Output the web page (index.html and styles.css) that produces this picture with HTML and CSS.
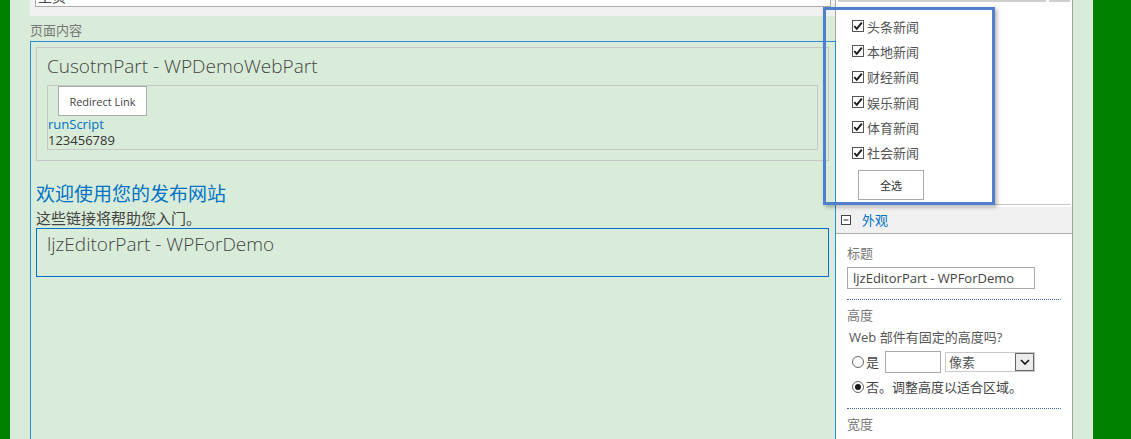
FILE: index.html
```html
<!DOCTYPE html>
<html lang="zh-CN">
<head>
<meta charset="utf-8">
<title>页面内容</title>
<link rel="stylesheet" href="styles.css">
</head>
<body>
<div class="page">
  <div class="main">
    <div class="head">
      <div class="topbar"><div class="topinput"><span class="topinput-text">主页</span></div></div>
      <div class="zone-label">页面内容</div>
    </div>
    <div class="zone">
      <div class="wp">
        <div class="wp-title">CusotmPart - WPDemoWebPart</div>
        <div class="wp-body">
          <button class="btn btn-redirect" type="button">Redirect Link</button>
          <a class="link" href="#">runScript</a>
          <div class="num">123456789</div>
        </div>
      </div>
      <div class="welcome">欢迎使用您的发布网站</div>
      <div class="welcome-sub">这些链接将帮助您入门。</div>
      <div class="editor-box">
        <div class="wp-title">ljzEditorPart - WPForDemo</div>
      </div>
    </div>
  </div>
  <div class="side">
    <div class="side-top"><span class="seg seg-a"></span><span class="seg seg-b"></span></div>
    <div class="checklist">
      <label class="cb-row"><svg class="cb" viewBox="0 0 12 12" width="12" height="12"><rect x="0.5" y="0.5" width="11" height="11" fill="#fff" stroke="#555"/><path d="M2.3 6.2 L4.8 8.8 L9.8 2.6" fill="none" stroke="#1a1a1a" stroke-width="1.9"/></svg><span>头条新闻</span></label>
      <label class="cb-row"><svg class="cb" viewBox="0 0 12 12" width="12" height="12"><rect x="0.5" y="0.5" width="11" height="11" fill="#fff" stroke="#555"/><path d="M2.3 6.2 L4.8 8.8 L9.8 2.6" fill="none" stroke="#1a1a1a" stroke-width="1.9"/></svg><span>本地新闻</span></label>
      <label class="cb-row"><svg class="cb" viewBox="0 0 12 12" width="12" height="12"><rect x="0.5" y="0.5" width="11" height="11" fill="#fff" stroke="#555"/><path d="M2.3 6.2 L4.8 8.8 L9.8 2.6" fill="none" stroke="#1a1a1a" stroke-width="1.9"/></svg><span>财经新闻</span></label>
      <label class="cb-row"><svg class="cb" viewBox="0 0 12 12" width="12" height="12"><rect x="0.5" y="0.5" width="11" height="11" fill="#fff" stroke="#555"/><path d="M2.3 6.2 L4.8 8.8 L9.8 2.6" fill="none" stroke="#1a1a1a" stroke-width="1.9"/></svg><span>娱乐新闻</span></label>
      <label class="cb-row"><svg class="cb" viewBox="0 0 12 12" width="12" height="12"><rect x="0.5" y="0.5" width="11" height="11" fill="#fff" stroke="#555"/><path d="M2.3 6.2 L4.8 8.8 L9.8 2.6" fill="none" stroke="#1a1a1a" stroke-width="1.9"/></svg><span>体育新闻</span></label>
      <label class="cb-row"><svg class="cb" viewBox="0 0 12 12" width="12" height="12"><rect x="0.5" y="0.5" width="11" height="11" fill="#fff" stroke="#555"/><path d="M2.3 6.2 L4.8 8.8 L9.8 2.6" fill="none" stroke="#1a1a1a" stroke-width="1.9"/></svg><span>社会新闻</span></label>
      <button class="btn btn-all" type="button">全选</button>
    </div>
    <div class="divider"></div>
    <div class="sec-head">
      <svg class="minus" viewBox="0 0 10 10" width="10" height="10"><rect x="0.5" y="0.5" width="9" height="9" fill="#fff" stroke="#444"/><path d="M2.5 5 H7.5" stroke="#222" stroke-width="1"/></svg>
      <span class="sec-title">外观</span>
    </div>
    <div class="sec-body">
      <div class="field-label label-title">标题</div>
      <div class="textbox">ljzEditorPart - WPForDemo</div>
      <div class="dots dots-1"></div>
      <div class="field-label label-height">高度</div>
      <div class="question">Web 部件有固定的高度吗?</div>
      <div class="radio-row row-yes">
        <svg class="radio" viewBox="0 0 12 12" width="12" height="12"><circle cx="6" cy="6" r="5.5" fill="#fff" stroke="#666"/></svg>
        <span class="radio-text">是</span>
        <span class="small-input"></span>
        <span class="select"><span class="select-text">像素</span><span class="select-btn"><svg viewBox="0 0 10 6" width="10" height="6"><path d="M1 1 L5 5 L9 1" fill="none" stroke="#111" stroke-width="1.6"/></svg></span></span>
      </div>
      <div class="radio-row row-no">
        <svg class="radio" viewBox="0 0 12 12" width="12" height="12"><circle cx="6" cy="6" r="5.5" fill="#fff" stroke="#666"/><circle cx="6" cy="6" r="3" fill="#1a1a1a"/></svg>
        <span class="radio-text">否。调整高度以适合区域。</span>
      </div>
      <div class="dots dots-2"></div>
      <div class="field-label label-width">宽度</div>
    </div>
  </div>
</div>
<div class="annot"></div>
</body>
</html>
```

FILE: styles.css
```css
html, body {
  margin: 0;
  padding: 0;
  height: 439px;
  overflow: hidden;
}
body {
  background: #008000;
  font-family: "Segoe UI", "Open Sans", "Noto Sans CJK SC", sans-serif;
  font-size: 13px;
  color: #444;
  position: relative;
}
.page {
  margin-left: 10px;
  width: 1083px;
  height: 439px;
  box-sizing: border-box;
  padding-left: 20px;
  background: #d9ecd9;
  display: flex;
}
.main {
  width: 806px;
  display: flex;
  flex-direction: column;
}
.head {
  height: 41px;
  border-right: 1px solid #a6a6a6;
  box-sizing: border-box;
}
.topbar {
  height: 16px;
  background: #f1f1f1;
  padding-left: 5px;
}
.topinput {
  width: 796px;
  height: 7px;
  box-sizing: border-box;
  background: #fff;
  border: 1px solid #ababab;
  border-top: none;
  overflow: hidden;
  padding-left: 2px;
}
.topinput-text {
  display: block;
  font-size: 14px;
  line-height: 14px;
  margin-top: -10px;
  color: #444;
}
.zone-label {
  font-size: 13px;
  line-height: 17px;
  padding-top: 6px;
  color: #777;
}
.zone {
  flex: 1;
  border: 1px solid #2b8bd6;
  border-bottom: none;
  padding: 5px 6px 0 5px;
}
.wp {
  border: 1px solid #c6c6c6;
  padding: 6px 10px 10px 10px;
}
.wp-title {
  font-family: "Segoe UI Light", "Segoe UI", "Open Sans", sans-serif;
  font-weight: 300;
  font-size: 19px;
  line-height: 24px;
  color: #444;
}
.wp-body {
  margin-top: 7px;
  border: 1px solid #c6c6c6;
  padding-bottom: 1px;
}
.btn {
  font-family: "Segoe UI", "Open Sans", "Noto Sans CJK SC", sans-serif;
  font-size: 11px;
  color: #444;
  background: #fff;
  border: 1px solid #ababab;
  border-radius: 0;
  padding: 0;
  display: block;
}
.btn-redirect {
  width: 89px;
  height: 30px;
  margin-left: 10px;
}
.link {
  display: block;
  color: #0072c6;
  text-decoration: none;
  line-height: 16px;
}
.num {
  line-height: 16px;
  color: #333;
}
.welcome {
  margin-top: 20px;
  font-size: 19px;
  line-height: 26px;
  color: #0072c6;
}
.welcome-sub {
  margin-top: 2px;
  font-size: 15px;
  line-height: 19px;
  color: #444;
}
.editor-box {
  border: 1px solid #0072c6;
  padding: 3px 10px 20px 10px;
}
.side {
  width: 237px;
  box-sizing: border-box;
  background: #fff;
  border-right: 1px solid #a0a0a0;
}
.side-top {
  display: flex;
  padding-left: 2px;
  gap: 3px;
}
.seg {
  height: 0;
  border-bottom: 2px solid #cfcfcf;
}
.seg-a { width: 208px; }
.seg-b { width: 21px; }
.checklist {
  padding-top: 11.5px;
  padding-left: 16px;
}
.cb-row {
  display: flex;
  align-items: center;
  height: 25.3px;
  color: #555;
}
.cb {
  flex: none;
  margin-right: 3px;
}
.btn-all {
  width: 66px;
  height: 30px;
  margin-top: 4.5px;
  margin-left: 6px;
  color: #333;
}
.divider {
  margin: 4px 2px 0 4px;
  height: 1px;
  background: #c6c6c6;
}
.sec-head {
  margin-top: 2px;
  height: 27px;
  box-sizing: border-box;
  background: #f0f0f0;
  border-bottom: 1px solid #ababab;
  display: flex;
  align-items: center;
  padding-left: 5px;
}
.minus {
  flex: none;
  margin-right: 11px;
}
.sec-title {
  color: #0072c6;
  font-size: 13px;
}
.sec-body {
  padding-left: 11px;
}
.field-label {
  color: #777;
  line-height: 17px;
}
.label-title { margin-top: 11px; }
.textbox {
  margin-top: 5px;
  width: 188px;
  height: 22px;
  box-sizing: border-box;
  border: 1px solid #ababab;
  padding-left: 5px;
  line-height: 20px;
  color: #444;
}
.dots {
  width: 214px;
  height: 0;
  border-top: 1px dotted #3d62a8;
}
.dots-1 { margin-top: 10px; }
.dots-2 { margin-top: 11px; }
.label-height { margin-top: 7px; }
.label-width { margin-top: 7px; }
.question {
  padding-left: 2px;
  line-height: 17px;
  margin-top: 5px;
  color: #555;
}
.radio-row {
  display: flex;
  align-items: center;
  color: #444;
}
.row-yes {
  margin-top: 5px;
  height: 22px;
}
.row-no {
  margin-top: 4px;
  height: 20px;
}
.radio {
  flex: none;
  margin-left: 5px;
  margin-right: 2px;
}
.small-input {
  width: 56px;
  height: 22px;
  box-sizing: border-box;
  border: 1px solid #ababab;
  margin-left: 6px;
}
.select {
  margin-left: 4px;
  width: 90px;
  height: 20px;
  box-sizing: border-box;
  border: 1px solid #c8c8c8;
  display: flex;
  align-items: center;
  justify-content: space-between;
  padding-left: 3px;
}
.select-text {
  color: #555;
}
.select-btn {
  width: 19px;
  height: 18px;
  box-sizing: border-box;
  border: 1px solid #666;
  background: #ececec;
  display: flex;
  align-items: center;
  justify-content: center;
}
.annot {
  position: absolute;
  left: 823px;
  top: 7px;
  width: 172px;
  height: 198px;
  box-sizing: border-box;
  border: 3px solid #4f7fcd;
  box-shadow: 2px 2px 4px rgba(0, 0, 0, 0.3);
}
```
